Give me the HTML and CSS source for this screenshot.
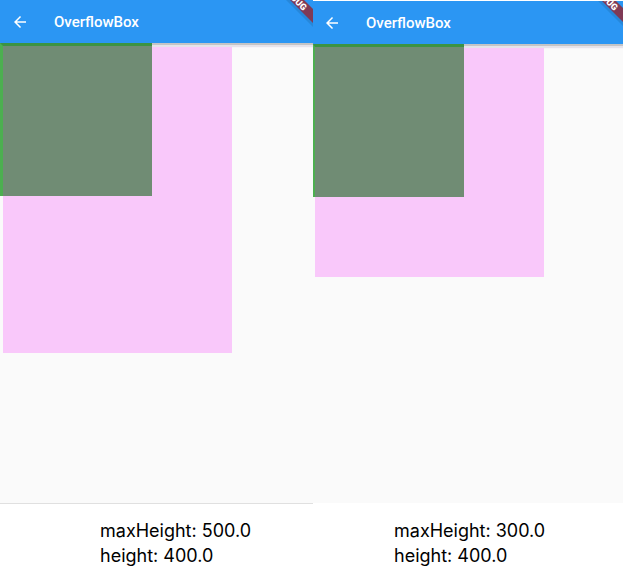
FILE: index.html
```
<!DOCTYPE html>
<html lang="en">
<head>
<meta charset="utf-8">
<title>OverflowBox</title>
<link rel="stylesheet" href="styles.css">
</head>
<body>
<main class="compare">
  <section class="pane pane-first">
    <div class="screen">
      <header class="app-bar">
        <button class="back" type="button" aria-label="Back">
          <svg viewBox="0 0 24 24" width="18" height="18"><path d="M20 11H7.83l5.59-5.59L12 4l-8 8 8 8 1.41-1.41L7.83 13H20v-2z" fill="currentColor"/></svg>
        </button>
        <h1 class="title">OverflowBox</h1>
        <svg class="banner" viewBox="0 0 32 32" width="32" height="32" aria-hidden="true">
          <path class="banner-shade" d="M5 0H11L32 21V27Z"/>
          <path class="banner-band" d="M9 0H23L32 9V23Z"/>
          <text class="banner-text" transform="translate(22 11) rotate(45)" text-anchor="end">DEBUG</text>
        </svg>
      </header>
      <div class="stage">
        <div class="parent parent-tall"></div>
        <div class="child"></div>
      </div>
    </div>
    <p class="caption">maxHeight: 500.0<br>height: 400.0</p>
  </section>
  <section class="pane pane-second">
    <div class="screen">
      <header class="app-bar">
        <button class="back" type="button" aria-label="Back">
          <svg viewBox="0 0 24 24" width="18" height="18"><path d="M20 11H7.83l5.59-5.59L12 4l-8 8 8 8 1.41-1.41L7.83 13H20v-2z" fill="currentColor"/></svg>
        </button>
        <h1 class="title">OverflowBox</h1>
        <svg class="banner" viewBox="0 0 32 32" width="32" height="32" aria-hidden="true">
          <path class="banner-shade" d="M7 0H13L32 19V25Z"/>
          <path class="banner-band" d="M11 0H25L32 7V21Z"/>
          <text class="banner-text" transform="translate(23 10) rotate(45)" text-anchor="end">DEBUG</text>
        </svg>
      </header>
      <div class="stage">
        <div class="parent parent-short"></div>
        <div class="child"></div>
      </div>
    </div>
    <p class="caption">maxHeight: 300.0<br>height: 400.0</p>
  </section>
</main>
</body>
</html>
```
FILE: styles.css
```
* {
  box-sizing: border-box;
}

body {
  margin: 0;
  background: #fff;
  font-family: Roboto, sans-serif;
}

.compare {
  display: grid;
  grid-template-columns: 313fr 310fr;
  min-height: 100vh;
}

.pane {
  display: flex;
  flex-direction: column;
}

.screen {
  flex: 1;
  display: flex;
  flex-direction: column;
  background: #fafafa;
}

.pane-first .screen {
  border-bottom: 1px solid #e0e0e0;
}

.pane-second {
  padding-top: 1px;
}

.app-bar {
  position: relative;
  display: flex;
  align-items: center;
  height: 43px;
  padding-left: 11px;
  background: #2b96f3;
  color: #fff;
}

.pane-second .app-bar {
  padding-left: 10px;
}

.back {
  display: flex;
  padding: 0;
  border: 0;
  background: none;
  color: inherit;
}

.title {
  margin: 0 0 0 25px;
  font-size: 15px;
  font-weight: 500;
  line-height: 20px;
}

.banner {
  position: absolute;
  top: 0;
  right: 0;
  overflow: hidden;
}

.banner-shade {
  fill: #2687da;
}

.banner-band {
  fill: #7f3a56;
}

.banner-text {
  fill: #fff;
  font-size: 9px;
  font-weight: 900;
}

.stage {
  position: relative;
  flex: 1;
  padding: 4px 3px 20px;
  background: linear-gradient(#c4c4c6 0 2px, #e6e3ea 2px 4px, #f6f4f8 4px 5px, #fafafa 5px);
}

.pane-second .stage {
  padding-left: 2px;
}

.parent {
  width: 229px;
  background: #f9c8fa;
}

.parent-tall {
  height: 306px;
}

.parent-short {
  height: 229px;
}

.child {
  position: absolute;
  top: 0;
  left: 0;
  width: 152px;
  height: 153px;
  border-top: 3px solid #3c9343;
  border-left: 3px solid #4caf50;
  background: #708c74;
}

.pane-second .child {
  width: 151px;
  border-left-width: 2px;
}

.caption {
  margin: 0;
  padding: 14px 0 0 100px;
  height: 62px;
  color: #000;
  font-family: Inter, sans-serif;
  font-size: 18px;
  line-height: 25px;
}

.pane-second .caption {
  height: 63px;
  padding-top: 15px;
  padding-left: 81px;
}
```
